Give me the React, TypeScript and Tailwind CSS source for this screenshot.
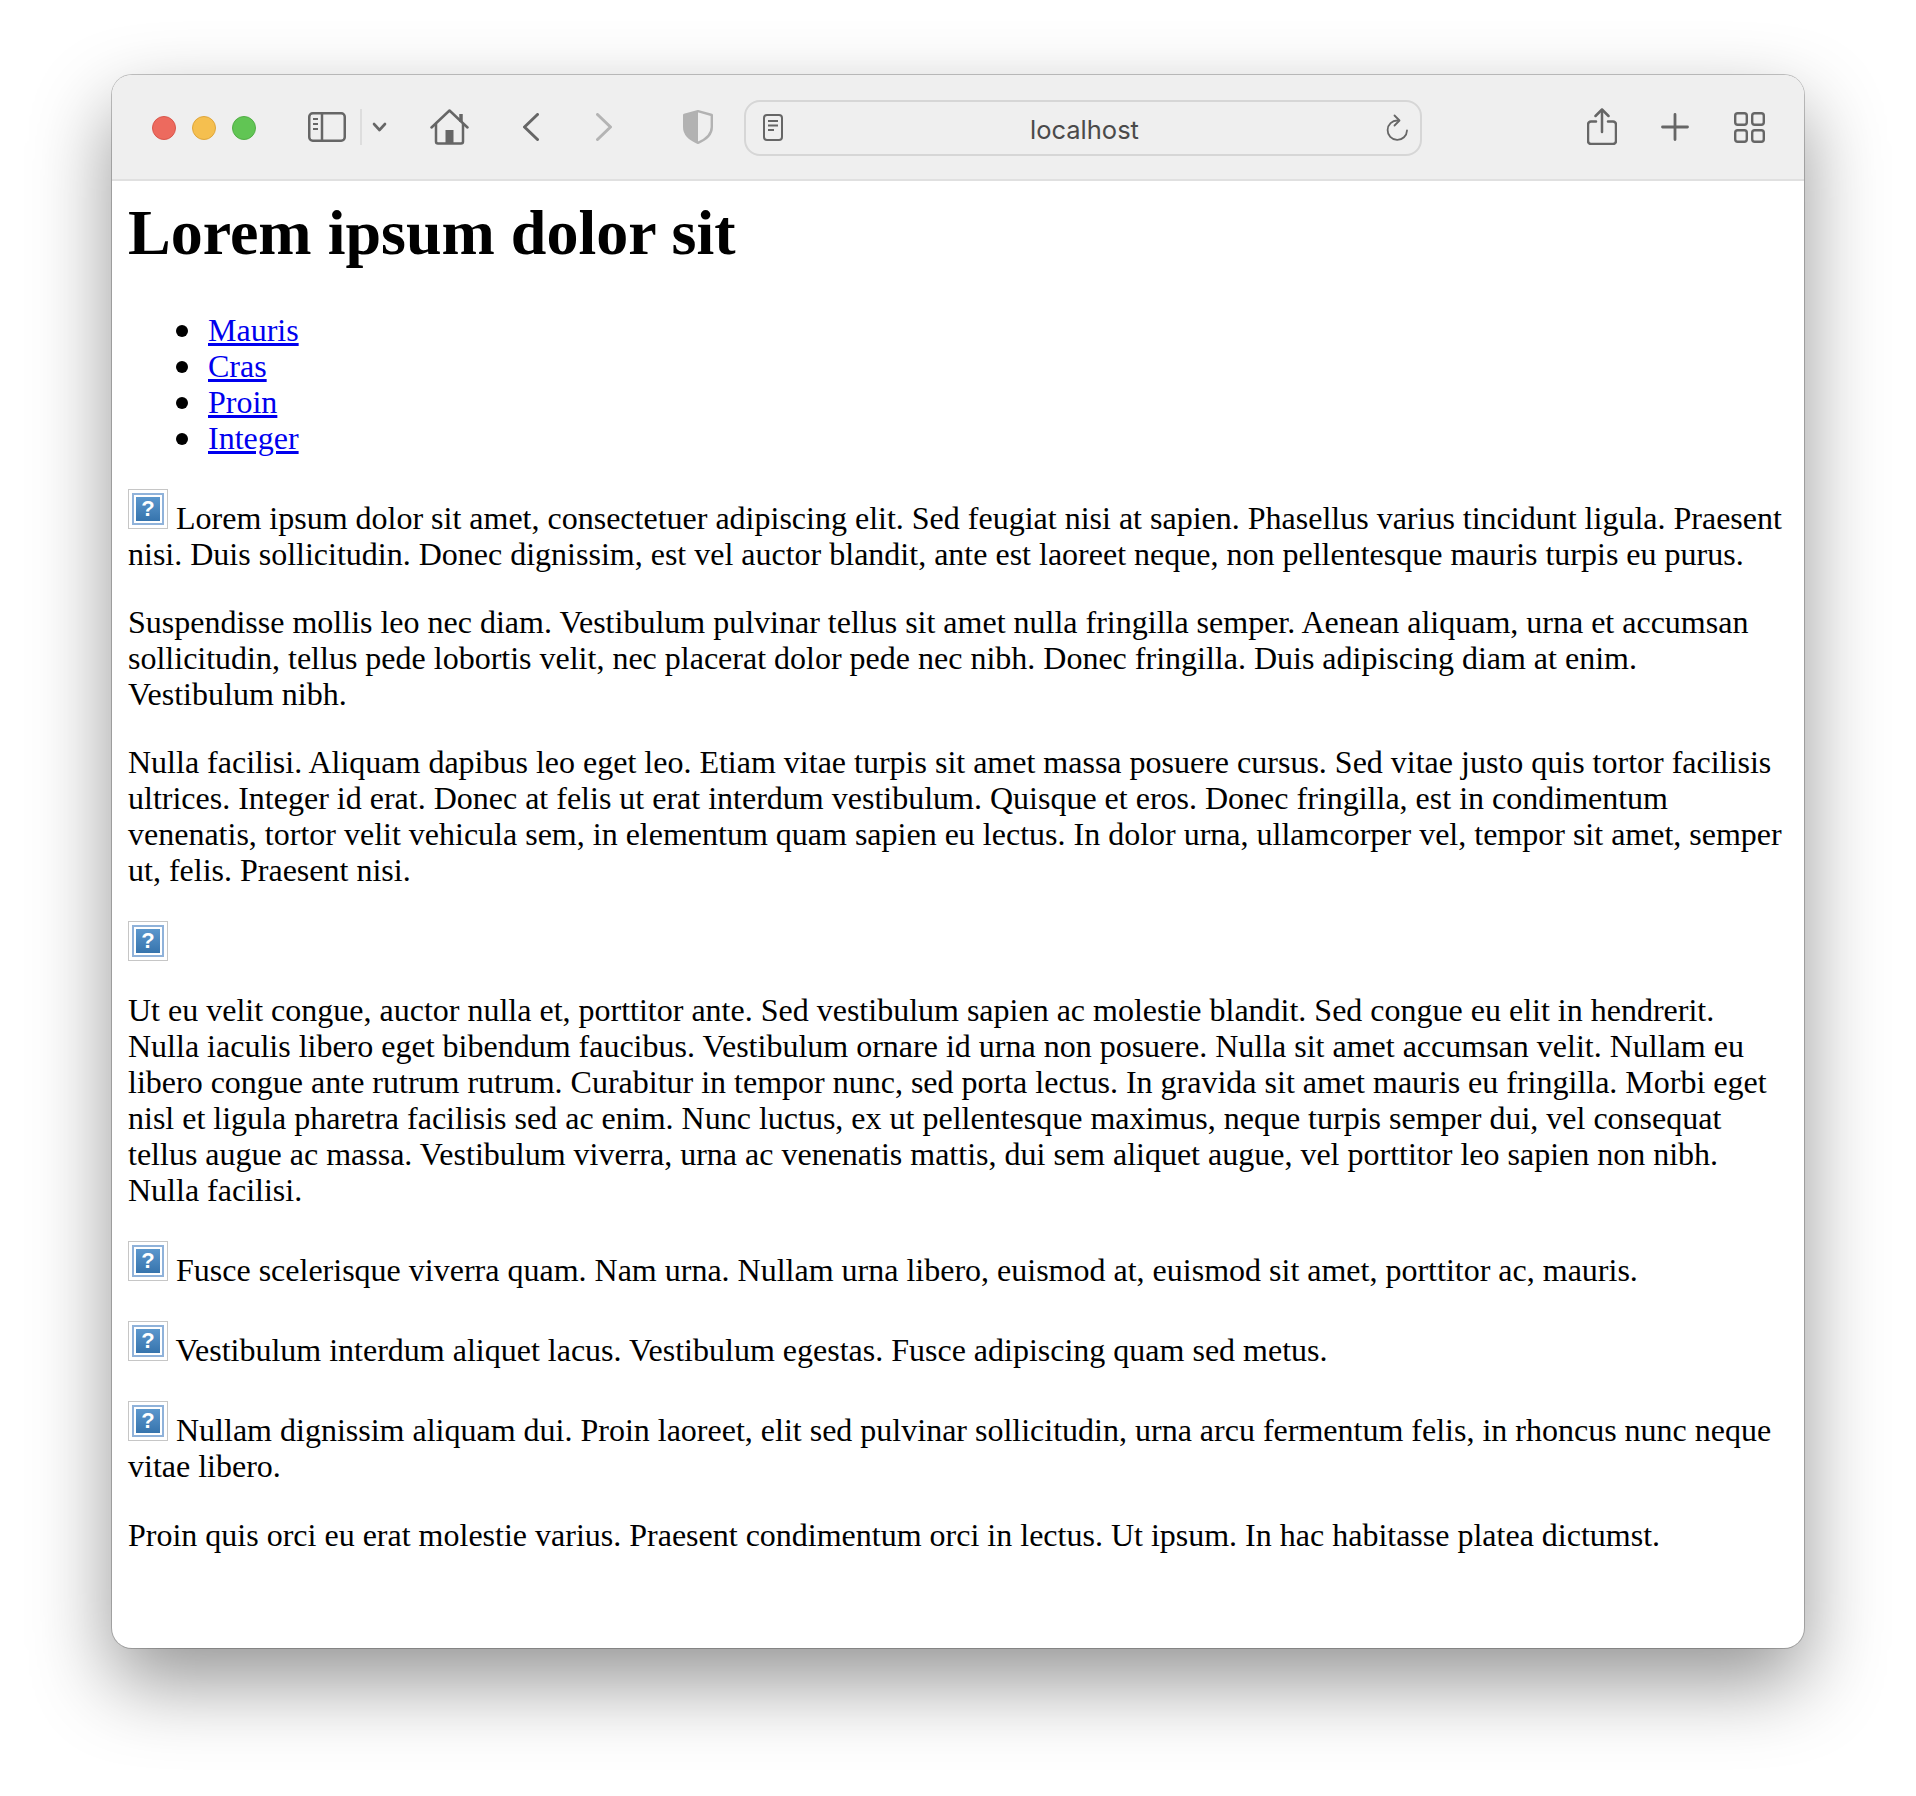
const Placeholder = () => (
  <span className="inline-block w-10 h-10 overflow-hidden border border-[#c6c6c6] p-[3px]">
    <span className="flex w-full h-full items-center justify-center border-2 border-[#8fb2da] p-[2px]">
      <span className="flex w-full h-full items-center justify-center bg-gradient-to-b from-[#5b97cd] to-[#3674ad] text-white text-[22px] leading-none font-bold font-['Liberation_Sans',sans-serif]">
        ?
      </span>
    </span>
  </span>
);

const iconClass = "shrink-0 fill-none stroke-[#666666]";
const bullet = "relative before:absolute before:left-[-32px] before:top-[13px] before:h-3 before:w-3 before:rounded-full before:bg-black";

const Toolbar = () => (
  <div className="flex h-[106px] shrink-0 items-center rounded-t-[20px] border-b-2 border-[#e0e0e0] bg-[#efefef] pl-10">
    <div className="mt-[2px] flex gap-4">
      <span className="w-6 h-6 rounded-full bg-[#ed6a5e] border border-[#d9574c]" />
      <span className="w-6 h-6 rounded-full bg-[#f5bf4f] border border-[#dfa63b]" />
      <span className="w-6 h-6 rounded-full bg-[#61c554] border border-[#52ae46]" />
    </div>

    {/* sidebar */}
    <svg className={`${iconClass} ml-[52px]`} width="38" height="30" viewBox="0 0 38 30" strokeWidth="2.5">
      <rect x="1.25" y="1.25" width="35.5" height="27.5" rx="3.5" />
      <path d="M14 1v28" />
      <path d="M5 7h5M5 12h5M5 17h5" strokeWidth="2" />
    </svg>
    <span className="ml-[14px] w-[2px] h-9 bg-[#dddddd]" />
    <svg className={`${iconClass} ml-[10px]`} width="15" height="10" viewBox="0 0 15 10" strokeWidth="2.6" strokeLinecap="round" strokeLinejoin="round">
      <path d="M2 2l5.5 6L13 2" />
    </svg>

    {/* home */}
    <svg className={`${iconClass} ml-[43px]`} width="39" height="36" viewBox="0 0 39 36" strokeWidth="2.5" strokeLinecap="round" strokeLinejoin="round">
      <path d="M1.5 18.5L19.5 1.5l18 17" />
      <path d="M6 15v17.5a2 2 0 0 0 2 2h23a2 2 0 0 0 2-2V15" />
      <path d="M31 5v8" strokeWidth="3.5" strokeLinecap="butt" />
      <rect x="15.5" y="21" width="8" height="13.5" fill="#666666" stroke="none" />
    </svg>

    {/* back / forward */}
    <svg className={`${iconClass} ml-[54px]`} width="16" height="28" viewBox="0 0 16 28" strokeWidth="3" strokeLinecap="round" strokeLinejoin="round">
      <path d="M14.5 1.5L1.5 14l13 12.5" />
    </svg>
    <svg className="shrink-0 fill-none stroke-[#b4b4b4] ml-[57px]" width="16" height="28" viewBox="0 0 16 28" strokeWidth="3" strokeLinecap="round" strokeLinejoin="round">
      <path d="M1.5 1.5L14.5 14 1.5 26.5" />
    </svg>

    {/* shield */}
    <svg className="shrink-0 ml-[71px]" width="30" height="34" viewBox="0 0 30 34">
      <path d="M15 1.2L1.2 5v12c0 8 6 12.6 13.8 15.8C22.8 29.6 28.8 25 28.8 17V5z" fill="none" stroke="#b2b2b2" strokeWidth="2.4" strokeLinejoin="round" />
      <path d="M15 1.2L1.2 5v12c0 8 6 12.6 13.8 15.8z" fill="#b2b2b2" />
    </svg>

    {/* address bar */}
    <div className="ml-[31px] mt-[2px] flex h-[56px] w-[678px] shrink-0 items-center rounded-2xl border-2 border-[#d6d6d6] pl-[17px] pr-[11px]">
      <svg className={`${iconClass} -mt-[2px]`} width="20" height="27" viewBox="0 0 20 27" strokeWidth="2">
        <rect x="1" y="1" width="18" height="25" rx="3" />
        <path d="M5 7h10M5 11.5h10M5 16h6" />
      </svg>
      <span className="flex-1 pt-[3px] text-center text-[25.5px] leading-none text-[#4a4a4a] font-['Inter',sans-serif]">
        localhost
      </span>
      <svg className={iconClass} width="23" height="29" viewBox="0 0 23 29" strokeWidth="1.8" strokeLinecap="round" strokeLinejoin="round">
        <path d="M11.5 6.5A9.7 9.7 0 1 0 21 16.5" />
        <path d="M8.5 1.5l5 5-5 5" />
      </svg>
    </div>

    {/* share, new tab, tabs */}
    <svg className={`${iconClass} ml-[165px] -mt-[2px]`} width="30" height="37" viewBox="0 0 30 37" strokeWidth="2.5" strokeLinecap="round" strokeLinejoin="round">
      <path d="M9 13.5H4a3 3 0 0 0-3 3V33a3 3 0 0 0 3 3h22a3 3 0 0 0 3-3V16.5a3 3 0 0 0-3-3h-5" />
      <path d="M15 24V2" />
      <path d="M8.5 8L15 1.5 21.5 8" />
    </svg>
    <svg className={`${iconClass} ml-[44px]`} width="28" height="28" viewBox="0 0 28 28" strokeWidth="2.8" strokeLinecap="round">
      <path d="M14 1.5v25M1.5 14h25" />
    </svg>
    <svg className={`${iconClass} ml-[45px]`} width="31" height="31" viewBox="0 0 31 31" strokeWidth="2.4">
      <rect x="1.2" y="1.2" width="11.6" height="11.6" rx="2.5" />
      <rect x="18.2" y="1.2" width="11.6" height="11.6" rx="2.5" />
      <rect x="1.2" y="18.2" width="11.6" height="11.6" rx="2.5" />
      <rect x="18.2" y="18.2" width="11.6" height="11.6" rx="2.5" />
    </svg>
  </div>
);

export default function App() {
  return (
    <div className="min-h-[1796px] w-[1916px] bg-white pl-[112px] pt-[75px]">
      <div className="flex h-[1573px] w-[1692px] flex-col rounded-[20px] bg-white shadow-[0_34px_80px_0px_rgba(0,0,0,0.42),0_0_0_1px_rgba(0,0,0,0.22)]">
        <Toolbar />
        <main className="px-4 text-[32px] leading-9 text-black font-['Liberation_Serif',serif]">
          <h1 className="mt-[15px] mb-[42px] text-[64px] leading-[74px] font-bold">Lorem ipsum dolor sit</h1>
          <ul className="mb-[33px] list-none pl-20 text-[#0000ee] underline">
            <li className={bullet}><a href="#">Mauris</a></li>
            <li className={bullet}><a href="#">Cras</a></li>
            <li className={bullet}><a href="#">Proin</a></li>
            <li className={bullet}><a href="#">Integer</a></li>
          </ul>
          <p className="mb-8">
            <Placeholder /> Lorem ipsum dolor sit amet, consectetuer adipiscing elit. Sed feugiat nisi at sapien. Phasellus varius tincidunt ligula. Praesent nisi. Duis sollicitudin. Donec dignissim, est vel auctor blandit, ante est laoreet neque, non pellentesque mauris turpis eu purus.
          </p>
          <p className="mb-8">
            Suspendisse mollis leo nec diam. Vestibulum pulvinar tellus sit amet nulla fringilla semper. Aenean aliquam, urna et accumsan sollicitudin, tellus pede lobortis velit, nec placerat dolor pede nec nibh. Donec fringilla. Duis adipiscing diam at enim. Vestibulum nibh.
          </p>
          <p className="mb-[33px]">
            Nulla facilisi. Aliquam dapibus leo eget leo. Etiam vitae turpis sit amet massa posuere cursus. Sed vitae justo quis tortor facilisis ultrices. Integer id erat. Donec at felis ut erat interdum vestibulum. Quisque et eros. Donec fringilla, est in condimentum venenatis, tortor velit vehicula sem, in elementum quam sapien eu lectus. In dolor urna, ullamcorper vel, tempor sit amet, semper ut, felis. Praesent nisi.
          </p>
          <p className="mb-8 h-[39px]">
            <Placeholder />
          </p>
          <p className="mb-[33px]">
            Ut eu velit congue, auctor nulla et, porttitor ante. Sed vestibulum sapien ac molestie blandit. Sed congue eu elit in hendrerit. Nulla iaculis libero eget bibendum faucibus. Vestibulum ornare id urna non posuere. Nulla sit amet accumsan velit. Nullam eu libero congue ante rutrum rutrum. Curabitur in tempor nunc, sed porta lectus. In gravida sit amet mauris eu fringilla. Morbi eget nisl et ligula pharetra facilisis sed ac enim. Nunc luctus, ex ut pellentesque maximus, neque turpis semper dui, vel consequat tellus augue ac massa. Vestibulum viverra, urna ac venenatis mattis, dui sem aliquet augue, vel porttitor leo sapien non nibh. Nulla facilisi.
          </p>
          <p className="mb-[33px]">
            <Placeholder /> Fusce scelerisque viverra quam. Nam urna. Nullam urna libero, euismod at, euismod sit amet, porttitor ac, mauris.
          </p>
          <p className="mb-[33px]">
            <Placeholder /> Vestibulum interdum aliquet lacus. Vestibulum egestas. Fusce adipiscing quam sed metus.
          </p>
          <p className="mb-[33px]">
            <Placeholder /> Nullam dignissim aliquam dui. Proin laoreet, elit sed pulvinar sollicitudin, urna arcu fermentum felis, in rhoncus nunc neque vitae libero.
          </p>
          <p>
            Proin quis orci eu erat molestie varius. Praesent condimentum orci in lectus. Ut ipsum. In hac habitasse platea dictumst.
          </p>
        </main>
      </div>
    </div>
  );
}
